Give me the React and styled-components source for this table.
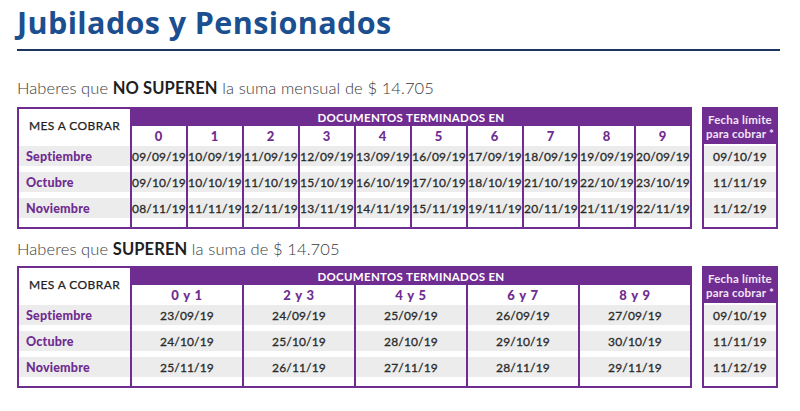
import React from "react";
import styled, { createGlobalStyle } from "styled-components";

const PURPLE = "#6f2c91";

const GlobalStyle = createGlobalStyle`
  body {
    margin: 0;
    background: #fff;
    font-family: "Lato", "Open Sans", sans-serif;
  }
`;

const Page = styled.div`
  width: 763px;
  padding: 4px 0 0 17px;
`;

const Title = styled.h1`
  margin: 0;
  padding-bottom: 9px;
  border-bottom: 2px solid #1c355e;
  font-family: "Open Sans", sans-serif;
  font-weight: 700;
  font-size: 30.5px;
  line-height: 36px;
  color: #1b4f8f;
  letter-spacing: 0.4px;
`;

const Subtitle = styled.p`
  margin: ${(p) => p.$top}px 0 ${(p) => p.$bottom}px;
  font-size: 16.5px;
  line-height: 20px;
  color: #3a3a3a;
  font-weight: 300;
  letter-spacing: 0.1px;

  b {
    font-weight: 700;
    color: #1f1f1f;
  }
`;

const Row = styled.div`
  display: flex;
  gap: 10px;
  width: 761px;
`;

const Table = styled.div`
  flex: 1;
  min-width: 0;
  display: flex;
  border: 2px solid ${PURPLE};
`;

const MesCol = styled.div`
  width: 111px;
  flex-shrink: 0;
  border-right: 2px solid ${PURPLE};
  display: flex;
  flex-direction: column;
  padding-bottom: 9px;
`;

const MesHead = styled.div`
  height: 37px;
  display: flex;
  align-items: center;
  justify-content: center;
  font-size: 12px;
  font-weight: 400;
  color: #222;
  letter-spacing: 0.4px;
  padding-bottom: 4px;
  box-sizing: border-box;
  -webkit-text-stroke: 0.25px #222;
`;

const Stripe = styled.div`
  height: 20px;
  background: #ececec;
  display: flex;
  align-items: center;
  justify-content: ${(p) => (p.$left ? "flex-start" : "center")};
  padding-left: ${(p) => (p.$left ? "7px" : "0")};
  font-size: ${(p) => (p.$left ? "12.5px" : "12px")};
  font-weight: ${(p) => (p.$left ? 900 : 400)};
  color: ${(p) => (p.$left ? PURPLE : "#2a2a2a")};
  -webkit-text-stroke: ${(p) => (p.$left ? "0" : "0.3px #2a2a2a")};
  white-space: nowrap;
  overflow: hidden;
  letter-spacing: ${(p) => (p.$left ? "0.2px" : "0.15px")};

  & + & {
    margin-top: 6px;
  }
`;

const Digits = styled.div`
  flex: 1;
  min-width: 0;
  display: flex;
  flex-direction: column;
`;

const Band = styled.div`
  height: 17px;
  background: ${PURPLE};
  color: #fff;
  font-size: 11.5px;
  font-weight: 700;
  letter-spacing: 0.3px;
  display: flex;
  align-items: center;
  justify-content: center;
`;

const Cols = styled.div`
  flex: 1;
  display: flex;
`;

const Col = styled.div`
  flex: 1 1 0;
  min-width: 0;
  display: flex;
  flex-direction: column;
  padding-bottom: 9px;

  & + & {
    border-left: 2px solid ${PURPLE};
  }
`;

const ColHead = styled.div`
  height: 20px;
  display: flex;
  align-items: center;
  justify-content: center;
  font-size: 13px;
  font-weight: 900;
  color: ${PURPLE};
  letter-spacing: 0.8px;
`;

const Limit = styled.div`
  width: 72px;
  flex-shrink: 0;
  border: 2px solid ${PURPLE};
  display: flex;
  flex-direction: column;
  padding-bottom: 9px;
`;

const LimitHead = styled.div`
  height: 35px;
  margin-bottom: 2px;
  background: ${PURPLE};
  color: #f1e6f6;
  font-size: 11.5px;
  font-weight: 700;
  line-height: 14px;
  text-align: center;
  white-space: nowrap;
  display: flex;
  align-items: center;
  justify-content: center;
  letter-spacing: 0.2px;
`;

const months = ["Septiembre", "Octubre", "Noviembre"];

const t1 = {
  heads: ["0", "1", "2", "3", "4", "5", "6", "7", "8", "9"],
  rows: [
    ["09/09/19", "10/09/19", "11/09/19", "12/09/19", "13/09/19", "16/09/19", "17/09/19", "18/09/19", "19/09/19", "20/09/19"],
    ["09/10/19", "10/10/19", "11/10/19", "15/10/19", "16/10/19", "17/10/19", "18/10/19", "21/10/19", "22/10/19", "23/10/19"],
    ["08/11/19", "11/11/19", "12/11/19", "13/11/19", "14/11/19", "15/11/19", "19/11/19", "20/11/19", "21/11/19", "22/11/19"],
  ],
};

const t2 = {
  heads: ["0 y 1", "2 y 3", "4 y 5", "6 y 7", "8 y 9"],
  rows: [
    ["23/09/19", "24/09/19", "25/09/19", "26/09/19", "27/09/19"],
    ["24/10/19", "25/10/19", "28/10/19", "29/10/19", "30/10/19"],
    ["25/11/19", "26/11/19", "27/11/19", "28/11/19", "29/11/19"],
  ],
};

const limits = ["09/10/19", "11/11/19", "11/12/19"];

const Schedule = ({ data }) => (
  <Row>
    <Table>
      <MesCol>
        <MesHead>MES A COBRAR</MesHead>
        {months.map((m) => (
          <Stripe key={m} $left>
            {m}
          </Stripe>
        ))}
      </MesCol>
      <Digits>
        <Band>DOCUMENTOS TERMINADOS EN</Band>
        <Cols>
          {data.heads.map((h, i) => (
            <Col key={h}>
              <ColHead>{h}</ColHead>
              {data.rows.map((r, j) => (
                <Stripe key={j}>{r[i]}</Stripe>
              ))}
            </Col>
          ))}
        </Cols>
      </Digits>
    </Table>
    <Limit>
      <LimitHead>
        Fecha límite
        <br />
        para cobrar *
      </LimitHead>
      {limits.map((d) => (
        <Stripe key={d}>{d}</Stripe>
      ))}
    </Limit>
  </Row>
);

export default function App() {
  return (
    <>
      <GlobalStyle />
      <Page>
        <Title>Jubilados y Pensionados</Title>
        <Subtitle $top={27} $bottom={9}>
          Haberes que <b>NO SUPEREN</b> la suma mensual de $ 14.705
        </Subtitle>
        <Schedule data={t1} />
        <Subtitle $top={10} $bottom={7}>
          Haberes que <b>SUPEREN</b> la suma de $ 14.705
        </Subtitle>
        <Schedule data={t2} />
      </Page>
    </>
  );
}
